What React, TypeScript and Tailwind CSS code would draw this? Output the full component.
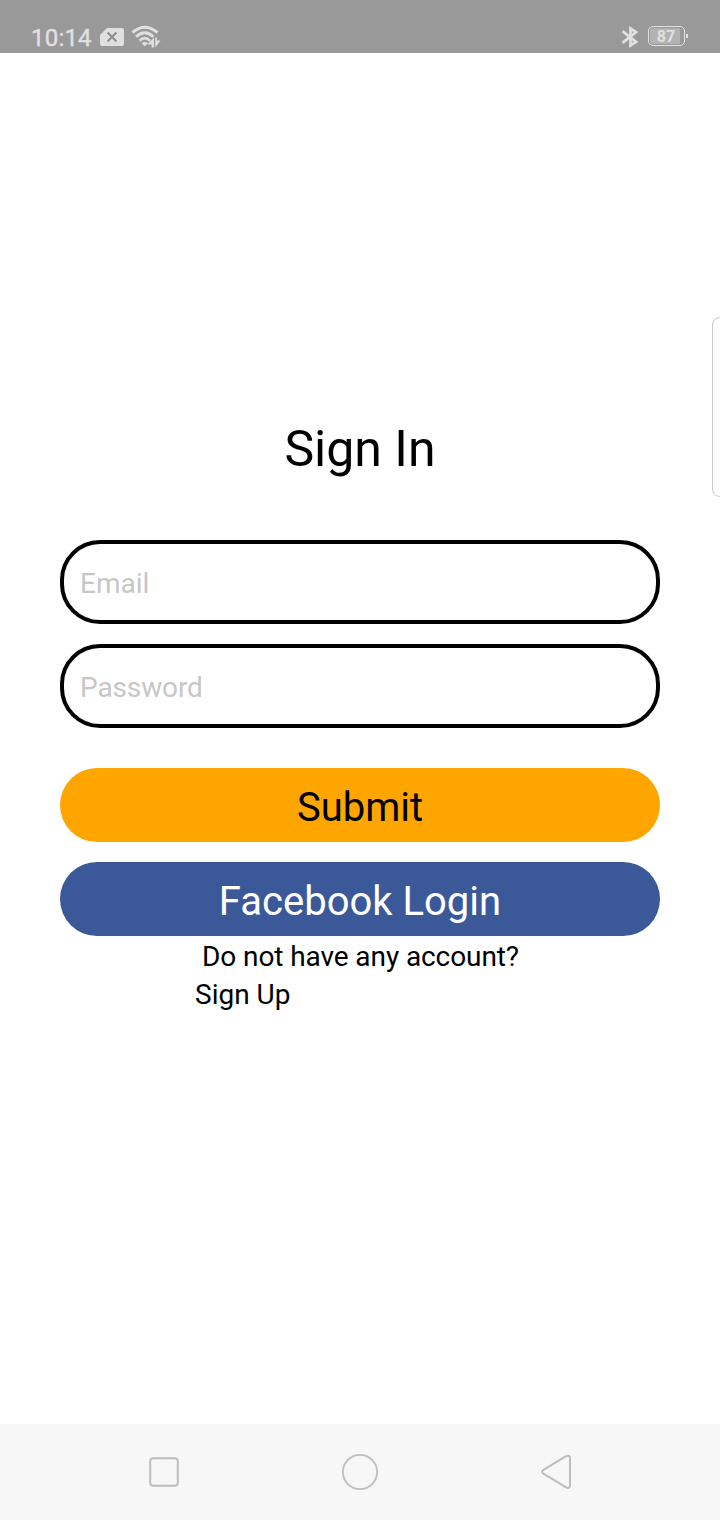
function StatusBar() {
  return (
    <header className="flex h-[53px] shrink-0 items-start justify-between bg-[#999999] pr-[32px] pl-[31px] text-[#e0e0e0]">
      <div className="flex">
        <span className="mt-[22px] w-[69px] text-[24px] leading-[32px] font-normal tracking-[0.2px] whitespace-nowrap [-webkit-text-stroke:0.4px_#e0e0e0]">10:14</span>
        <svg className="mt-[28px]" width="24" height="18" viewBox="0 0 24 18">
          <path d="M7 0H22Q24 0 24 2V16Q24 18 22 18H2Q0 18 0 16V7Z" fill="currentColor" />
          <path d="M7.5 4.5L16.5 13.5M16.5 4.5L7.5 13.5" stroke="#8f8f8f" strokeWidth="2" />
        </svg>
        <svg className="mt-[25px] ml-[7px]" width="30" height="24" viewBox="0 0 30 24" fill="none" stroke="currentColor">
          <path d="M1.5 7.5Q13.5 -3 26.5 7.5" strokeWidth="3" />
          <path d="M5 11.8Q13.8 3.8 22.5 11.8" strokeWidth="2.8" />
          <path d="M8.5 15.8Q13.8 10.6 19 15.8" strokeWidth="2.6" />
          <path d="M10.5 18.2Q13.8 15.2 17 18.2L13.8 21.2Z" fill="currentColor" stroke="none" />
          <path d="M23 12.5V22.5H20.6V19.5H16.4Z" fill="currentColor" stroke="none" />
          <path d="M24.2 22.5V12.5H25.8V15.5H29.5Z" fill="currentColor" stroke="none" />
        </svg>
      </div>
      <div className="flex">
        <svg className="mt-[26px]" width="18" height="22" viewBox="0 0 18 22" fill="none" stroke="currentColor" strokeWidth="2.8">
          <path d="M1.5 5.2L15 15.8L9.5 19.4V2.6L15 6.2L1.5 16.8" />
        </svg>
        <div className="mt-[26px] ml-[9px] flex h-[20px] w-[37px] rounded-[5px] border border-[#e0e0e0] p-px">
          <span className="flex w-[30px] items-center justify-center rounded-l-[3px] bg-[#b2b2b2] pt-[2px] pl-[2px] text-[16px] leading-[16px] font-bold">87</span>
        </div>
        <span className="mt-[34px] ml-px h-[4px] w-[2px] bg-[#e0e0e0]" />
      </div>
    </header>
  );
}

function NavigationBar() {
  return (
    <nav className="flex h-[96px] shrink-0 items-center justify-between bg-[#f7f7f7] px-[144px]">
      <svg width="40" height="40" viewBox="0 0 40 40" fill="none" stroke="#bdbdbd" strokeWidth="2">
        <rect x="6.2" y="6.2" width="27.6" height="27.6" rx="3" />
      </svg>
      <svg width="40" height="40" viewBox="0 0 40 40" fill="none" stroke="#bdbdbd" strokeWidth="1.8">
        <circle cx="20" cy="20" r="17.1" />
      </svg>
      <svg width="40" height="40" viewBox="0 0 40 40" fill="none" stroke="#bdbdbd" strokeWidth="2">
        <path d="M7.5 17.8L30 4.2Q34 2.6 34 6.5V33Q34 37.2 30 35.4L7.5 21.6Q4.7 19.7 7.5 17.8Z" />
      </svg>
    </nav>
  );
}

const inputClass =
  "h-[84px] w-full rounded-[40px] border-4 border-black bg-white px-[16px] pt-[3px] text-[28px] text-black outline-none placeholder:text-[#c7c7c7] placeholder:opacity-100";

export default function App() {
  return (
    <div className="relative flex h-[1520px] w-[720px] flex-col overflow-hidden bg-white font-['Roboto',sans-serif] text-black">
      <StatusBar />
      <main className="flex flex-1 flex-col px-[60px] pt-[356px]">
        <h1 className="h-[80px] text-center text-[50px] leading-[80px]">Sign In</h1>
        <form className="mt-[51px] flex flex-col" onSubmit={(event) => event.preventDefault()}>
          <input className={inputClass} type="email" placeholder="Email" />
          <div className="h-[20px]" />
          <input className={`${inputClass} tracking-[-0.12px]`} type="password" placeholder="Password" />
          <button className="mt-[40px] h-[74px] rounded-[40px] bg-[#ffa500] pt-[5px] text-[40px] leading-[69px]" type="submit">
            Submit
          </button>
          <button className="mt-[20px] h-[74px] rounded-[40px] bg-[#3b5998] pt-[5px] text-[40px] leading-[69px] text-white" type="button">
            Facebook Login
          </button>
        </form>
        <div className="mt-[2px] ml-[135px] flex w-[330px] flex-col items-start text-[28px] leading-[38px] whitespace-nowrap">
          <span className="pl-[7px] tracking-[-0.09px]">Do not have any account?</span>
          <a href="#signup">Sign Up</a>
        </div>
      </main>
      <NavigationBar />
      <div className="absolute top-[317px] right-[-12px] h-[180px] w-[20px] rounded-[8px] border border-[#c8c8c8] bg-white" />
    </div>
  );
}
